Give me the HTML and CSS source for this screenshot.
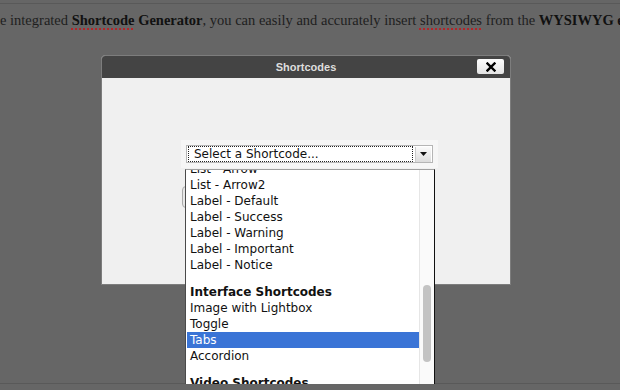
FILE: index.html
```html
<!DOCTYPE html>
<html lang="en">
<head>
    <meta charset="UTF-8">
    <title>Shortcodes</title>
    <link rel="stylesheet" href="styles.css">
</head>
<body>
    <div class="rule"></div>
    <p class="intro">e integrated <b><span class="typo">Shortcode</span> Generator</b>, you can easily and accurately insert <span class="typo">shortcodes</span> from the <b>WYSIWYG editor</b> with a few clicks</p>
    <div class="modal">
        <div class="modal-head">
            <span class="modal-title">Shortcodes</span>
            <div class="close">
                <svg width="10" height="10" viewBox="0 0 10 10"><path d="M1.5 1.5 L8.5 8.5 M8.5 1.5 L1.5 8.5" stroke="#000" stroke-width="2.4" stroke-linecap="square"/></svg>
            </div>
        </div>
        <div class="modal-body">
            <div class="picker">
                <div class="select">
                    <div class="select-value">Select a Shortcode...</div>
                    <div class="select-arrow">
                        <svg width="7" height="4" viewBox="0 0 7 4"><path d="M0 0 H7 L3.5 4 Z" fill="#111"/></svg>
                    </div>
                </div>
                <div class="hidden-btn"></div>
                <!-- open list of the select -->
                <div class="dropdown">
                    <div class="options">
                        <div class="opt first">List - Arrow</div>
                        <div class="opt">List - Arrow2</div>
                        <div class="opt">Label - Default</div>
                        <div class="opt">Label - Success</div>
                        <div class="opt">Label - Warning</div>
                        <div class="opt">Label - Important</div>
                        <div class="opt">Label - Notice</div>
                        <div class="group">Interface Shortcodes</div>
                        <div class="opt">Image with Lightbox</div>
                        <div class="opt">Toggle</div>
                        <div class="opt selected">Tabs</div>
                        <div class="opt">Accordion</div>
                        <div class="group">Video Shortcodes</div>
                        <div class="opt">YouTube</div>
                    </div>
                    <div class="scrollbar"><div class="thumb"></div></div>
                </div>
            </div>
        </div>
    </div>
    <div class="rule bottom"></div>
</body>
</html>
```

FILE: styles.css
```css
body {
    margin: 0;
    padding: 0;
    background-color: #666;
    overflow: hidden;
    font-family: "DejaVu Sans", Verdana, sans-serif;
}
.rule {
    height: 3px;
    border-bottom: 1px solid #595959;
}
.rule.bottom {
    margin-top: 98px;
    height: 0;
}
.intro {
    margin: 0;
    padding-top: 6px;
    height: 45px;
    font-family: "Liberation Serif", "Times New Roman", serif;
    font-size: 14.5px;
    line-height: 20px;
    color: #1e1e1e;
    white-space: nowrap;
    overflow: hidden;
}
.intro b {
    color: #111;
}
.typo {
    text-decoration-line: underline;
    text-decoration-style: dotted;
    text-decoration-color: #b3262a;
    text-decoration-thickness: 1.5px;
    text-underline-offset: 3px;
}
.modal {
    margin-left: 101px;
    width: 408px;
    border: 1px solid #7d7d7d;
    border-radius: 4px 4px 0 0;
    background-color: #f0f0f0;
}
.modal-head {
    height: 22px;
    background-color: #444;
    border-radius: 3px 3px 0 0;
    display: flex;
    align-items: center;
    justify-content: center;
    position: relative;
}
.modal-title {
    font-family: "Liberation Sans", Arial, sans-serif;
    font-weight: bold;
    font-size: 11px;
    color: #dedede;
}
.close {
    position: absolute;
    right: 6px;
    top: 3px;
    width: 27px;
    height: 15px;
    border-radius: 2px;
    background: linear-gradient(#fdfdfd, #e4e4e4);
    display: flex;
    align-items: center;
    justify-content: center;
}
.modal-body {
    height: 206px;
    padding-top: 62px;
    padding-left: 79px;
    box-sizing: border-box;
}
.picker {
    position: relative;
    width: 257px;
    height: 28px;
    background-color: #f6f6f6;
    display: flex;
    align-items: center;
    justify-content: center;
}
.select {
    width: 243px;
    height: 16px;
    background-color: #fff;
    border: 1px solid #b5b5b5;
    display: flex;
    align-items: center;
    padding: 0 1px;
}
.select-value {
    flex: 1;
    height: 14px;
    border: 1px dotted #222;
    font-size: 12px;
    line-height: 14px;
    padding-left: 5px;
    color: #111;
}
.select-arrow {
    width: 15px;
    height: 15px;
    margin-left: 2px;
    background: linear-gradient(#fafafa, #dcdcdc);
    border-left: 1px solid #ccc;
    display: flex;
    align-items: center;
    justify-content: center;
}
.hidden-btn {
    position: absolute;
    left: 1px;
    top: 46px;
    width: 12px;
    height: 20px;
    border: 1px solid #aaa;
    border-radius: 4px;
    background-color: #e8e8e8;
}
.dropdown {
    position: absolute;
    left: 4px;
    top: 29px;
    width: 248px;
    height: 230px;
    background-color: #fff;
    border-top: 1px solid #a0a0a0;
    border-left: 1px solid #4a4a4a;
    border-right: 1px solid #111;
    display: flex;
    overflow: hidden;
}
.options {
    width: 232px;
    padding-left: 1px;
    font-size: 12px;
    color: #111;
}
.opt,
.group {
    height: 16px;
    line-height: 16px;
    padding-left: 3px;
    white-space: nowrap;
}
.opt.first {
    margin-top: -9px;
}
.group {
    margin-top: 11px;
    font-weight: bold;
}
.opt.selected {
    background-color: #3a74d6;
    color: #fff;
}
.scrollbar {
    flex: 1;
    border-left: 1px solid #e6e6e6;
    background-color: #fafafa;
    padding-top: 115px;
}
.thumb {
    margin-left: 3px;
    width: 8px;
    height: 77px;
    border-radius: 4px;
    background-color: #c3c3c3;
}
```
